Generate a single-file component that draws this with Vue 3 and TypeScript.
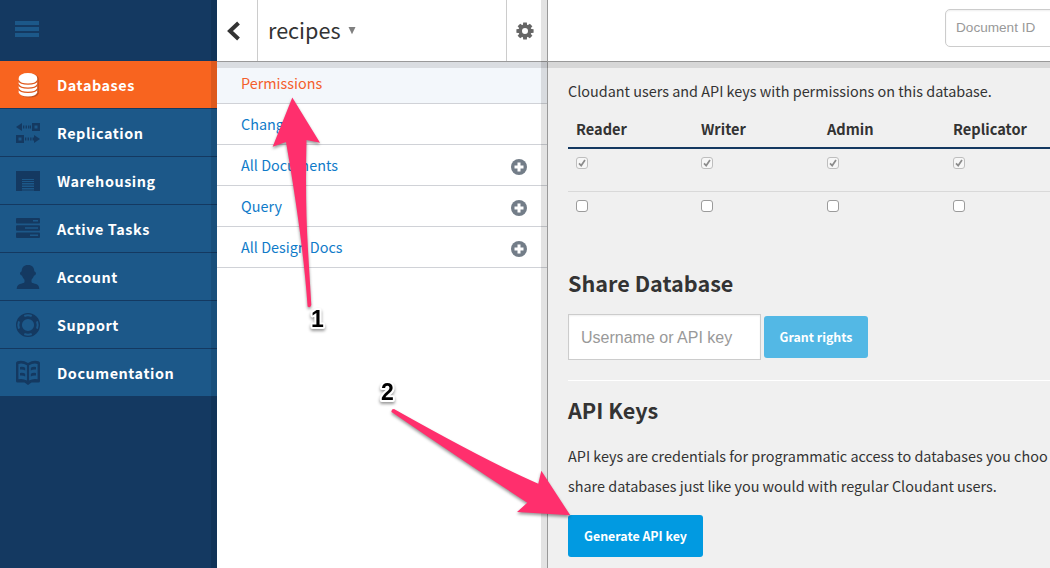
<script setup lang="ts">
interface NavItem { id: string; label: string; active?: boolean }
interface SubItem { label: string; active?: boolean; add?: boolean }

const nav: NavItem[] = [
  { id: 'db', label: 'Databases', active: true },
  { id: 'replication', label: 'Replication' },
  { id: 'warehouse', label: 'Warehousing' },
  { id: 'tasks', label: 'Active Tasks' },
  { id: 'account', label: 'Account' },
  { id: 'support', label: 'Support' },
  { id: 'docs', label: 'Documentation' },
]
const sub: SubItem[] = [
  { label: 'Permissions', active: true },
  { label: 'Changes' },
  { label: 'All Documents', add: true },
  { label: 'Query', add: true },
  { label: 'All Design Docs', add: true },
]
const roles: string[] = ['Reader', 'Writer', 'Admin', 'Replicator']
const gearTeeth: number[] = [0, 45, 90, 135, 180, 225, 270, 315]
</script>

<template>
  <div class="app">
    <nav class="nav">
      <div class="nav-top">
        <svg width="24" height="17" viewBox="0 0 24 17" fill="#1c5889"><path d="M0 0h24v4H0zM0 6h24v4H0zM0 12h24v4H0z" /></svg>
      </div>
      <div v-for="n in nav" :key="n.id" class="nav-item" :class="{ active: n.active }">
        <svg class="nav-icon" width="24" height="25" viewBox="0 0 24 25" fill="#143961">
          <template v-if="n.id === 'db'">
            <path d="M4 6.500a9 4.900 0 0 1 18.700 0V21.500q-1.500 4-9.200 4T4 21.500z" fill="#c24e1b" />
            <path d="M2.700 6a9.200 4.900 0 0 1 18.500 0V20.500q-1.400 4-9.200 4t-9.300-4z" fill="#fff" />
            <path d="M2.300 8.200q1.700 3.900 9.700 3.900t9.700-3.900M2.300 12.300q1.700 3.900 9.700 3.900t9.700-3.900M2.300 16.400q1.700 3.900 9.700 3.900t9.700-3.900" fill="none" stroke="#e0591c" stroke-width="1.300" />
          </template>
          <template v-else-if="n.id === 'replication'">
            <path d="M0 7l6-4v8zM7 5.500h1.300v3H7zM9.600 5.500h1.300v3H9.600zM12.100 5.500h1.300v3h-1.300zM14 5.500h1v3h-1z" />
            <path fill-rule="evenodd" d="M16 3h8v8h-8zM18.500 5.500v3h3v-3zM0 15h8v8H0zM2.500 17.500v3h3v-3z" />
            <path d="M9 17.500h1.300v3H9zM11.600 17.500h1.300v3h-1.300zM14.200 17.500h1.300v3h-1.300zM16.600 17.500H18V15l6 4-6 4v-2.500h-1.400z" />
          </template>
          <template v-else-if="n.id === 'warehouse'">
            <path d="M0 3h24v20h-6V11H6v12H0z" />
            <path d="M6 12h12v1H6zM6 14h12v1H6zM6 16.500h12v1H6zM6 19h12v1H6zM6 21.500h12v1H6z" />
          </template>
          <template v-else-if="n.id === 'tasks'">
            <rect y="2" width="24" height="5.500" rx="1" /><rect y="9.200" width="24" height="5.500" rx="1" /><rect y="16.400" width="24" height="5.500" rx="1" />
            <path fill="#1c5889" d="M17 4h5v1.600h-5zM9 11.200h13v1.600H9zM14 18.400h8V20h-8z" />
          </template>
          <template v-else-if="n.id === 'account'">
            <path d="M12 1c-4.300 0-6.300 2.600-6.300 6.300-.9.300-2 1.500-1.600 2.600.2.900 1.100 1.500 1.900 1.700.5 1.800 1.400 3.100 2.500 4.100v2.500c-1 1-3 1.300-4.600 1.900C1.800 20.900.900 22.200.700 25h22.600c-.2-2.800-1.100-4.100-3.200-4.900-1.600-.6-3.600-.9-4.600-1.900v-2.500c1.100-1 2-2.300 2.500-4.100.8-.2 1.700-.8 1.900-1.700.4-1.100-.7-2.300-1.600-2.600C18.300 3.600 16.300 1 12 1z" />
          </template>
          <template v-else-if="n.id === 'support'">
            <path fill-rule="evenodd" d="M12 1a12 12 0 1 1 0 24a12 12 0 1 1 0-24zM12 6.900a6.100 6.100 0 1 0 0 12.200a6.100 6.100 0 1 0 0-12.200z" />
            <g fill="none" stroke="#1c5889" stroke-width="2"><path d="M8.300 4q3.700-1.400 7.400 0M8.300 22q3.700 1.400 7.400 0M3 9.300q-1.400 3.700 0 7.400M21 9.300q1.400 3.700 0 7.400" /></g>
          </template>
          <template v-else>
            <path fill-rule="evenodd" d="M1.500 1.200Q7-.2 12 2.900q5-3.100 10.500-1.700Q24 1.700 24 3v18q0 1.500-1.500 1.500h-7L12 25l-3.500-2.500h-7Q0 22.500 0 21V3Q0 1.700 1.500 1.200zM2.400 3.900v15.400q4.600-1 8.500 1.200V5.300Q7 2.900 2.400 3.900zM21.600 3.900Q17 2.900 13.100 5.300v15.200q3.900-2.200 8.500-1.200z" />
            <path d="M4 7q3-.6 5.200.8v2.600Q7 9.200 4 9.600zM4 13q3-.6 5.200.8v2.600Q7 15.200 4 15.600zM20 7q-3-.6-5.200.8v2.600q2.200-1.200 5.200-.8zM20 13q-3-.6-5.200.8v2.600q2.200-1.200 5.200-.8z" />
          </template>
        </svg>
        <span>{{ n.label }}</span>
      </div>
    </nav>

    <div class="work">
      <header class="header">
        <div class="back">
          <svg width="14" height="20" viewBox="0 0 14 20"><path d="M11.500 2L3 10l8.500 8" fill="none" stroke="#333" stroke-width="4" /></svg>
        </div>
        <div class="db-name"><span>recipes</span><svg width="8" height="8" viewBox="0 0 8 8"><path d="M.5 0h7L4 7.300z" fill="#808080" /></svg></div>
        <div class="gear">
          <svg width="18" height="18" viewBox="-9 -9 18 18">
            <g fill="#666"><path v-for="a in gearTeeth" :key="a" d="M-1.800-8.600h3.600L2.300-5h-4.600z" :transform="`rotate(${a})`" /></g>
            <circle r="4.750" fill="none" stroke="#666" stroke-width="3.500" />
          </svg>
        </div>
        <div class="search"><input class="doc-id" type="text" placeholder="Document ID" /></div>
      </header>

      <div class="columns">
        <aside class="sub">
          <div v-for="s in sub" :key="s.label" class="sub-item" :class="{ active: s.active }">
            <span>{{ s.label }}</span>
            <svg v-if="s.add" width="16" height="16" viewBox="0 0 16 16"><circle cx="8" cy="8" r="8" fill="#737d88" /><path d="M6.500 3.500h3v3h3v3h-3v3h-3v-3h-3v-3h3z" fill="#fff" /></svg>
          </div>
        </aside>
        <main class="main">
          <p class="intro"><span>Cloudant users and API keys with permissions on this database.</span></p>
          <div class="row head"><div v-for="r in roles" :key="r"><span>{{ r }}</span></div></div>
          <div class="row first">
            <div v-for="r in roles" :key="r"><i class="box disabled"><svg width="10" height="10" viewBox="0 0 10 10"><path d="M2 5.300l2.200 2.300L8 2" fill="none" stroke="#8c8c8c" stroke-width="1.700" /></svg></i></div>
          </div>
          <div class="row"><div v-for="r in roles" :key="r"><i class="box"></i></div></div>
          <h2 class="share"><span>Share Database</span></h2>
          <div class="form">
            <input class="user" type="text" placeholder="Username or API key" />
            <button class="btn pale"><span>Grant rights</span></button>
          </div>
          <hr />
          <h2 class="keys"><span>API Keys</span></h2>
          <p class="desc"><span>API keys are credentials for programmatic access to databases you choo</span><br /><span>share databases just like you would with regular Cloudant users.</span></p>
          <button class="btn generate"><span>Generate API key</span></button>
        </main>
      </div>
    </div>

    <div class="nav-edge"></div>
    <div class="header-shade"></div>
    <div class="panel-edge"></div>
    <svg class="notes" width="1050" height="568" viewBox="0 0 1050 568">
      <g fill="#ff2f6d">
        <path d="M292.300 97.500L320 142.800 306.500 140Q305 200 308 250L311.300 305Q310 308.500 307.600 306.500Q303 240 286 142L272.700 146.700z" />
        <path d="M570.300 515.300L541.300 470.700 538.300 483.700Q490 463 394 409Q391 409 391.500 412Q466 463 527.300 502.700L517 512z" />
      </g>
      <g class="digits"><text x="311" y="327">1</text><text x="381" y="400">2</text></g>
    </svg>
  </div>
</template>

<style>
html, body { margin: 0; overflow: hidden; }
</style>
<style scoped>
.app { position: relative; display: flex; width: 1050px; height: 568px; overflow: hidden; font-family: "Noto Sans CJK SC", "Noto Sans CJK JP", sans-serif; color: #333; background: #fff; }
.app * { box-sizing: border-box; }
.nav { width: 217px; flex: none; background: #143961; }
.nav-top { height: 61px; padding: 21px 0 0 15px; }
.nav-top svg { display: block; }
.nav-item { display: flex; align-items: center; height: 48px; padding-left: 16px; gap: 17px; background: #1c5889; border-bottom: 1px solid #143961; color: #fff; font-size: 14.400px; font-weight: 700; letter-spacing: .55px; line-height: 23px; }
.nav-item.active { background: #f8641f; }
.nav-icon { flex: none; overflow: visible; }
.work { width: 833px; flex: none; display: flex; flex-direction: column; }
.header { display: flex; height: 62px; border-bottom: 1px solid #999; background: #fff; }
.back { width: 41px; border-right: 1px solid #ccc; padding: 21px 0 0 10px; }
.back svg, .gear svg { display: block; }
.db-name { width: 249px; border-right: 1px solid #ccc; padding: 12px 0 0 10px; display: flex; gap: 7px; font-size: 21.600px; line-height: 36px; }
.db-name svg { margin-top: 15px; }
.gear { width: 41px; padding: 22px 0 0 9px; border-right: 1px solid #999; }
.search { flex: 1; padding: 9px 0 0 397px; overflow: hidden; }
.doc-id { width: 180px; height: 38px; border: 1px solid #ccc; border-radius: 5px; padding: 0 10px 1px; font: 13.600px "Liberation Sans", sans-serif; box-shadow: inset 0 1px 2px #0001; }
input { display: block; background: #fff; outline: 0; }
input::placeholder { color: #999; opacity: 1; }
.columns { display: flex; flex: 1; }
.sub { width: 331px; flex: none; border-right: 1px solid #999; background: #fff; }
.sub-item { display: flex; height: 41px; align-items: center; justify-content: space-between; padding: 0 20px 0 24px; border-bottom: 1px solid #d0d2d7; color: #0f7bc9; font-size: 14.400px; line-height: 22px; }
.sub-item svg { position: relative; top: 2px; }
.sub-item.active { height: 42px; padding-top: 1px; background: #f3f7fb; color: #f35f2c; }
.main { flex: 1; min-width: 0; padding-left: 20px; background: #f0f0f0; overflow: hidden; }
p, h2 { margin: 0; white-space: nowrap; }
.intro { padding-top: 17px; height: 51px; font-size: 14.420px; line-height: 24px; }
.row { display: grid; grid-template-columns: 125px 126px 126px 1fr; padding-left: 8px; height: 52px; padding-top: 8px; }
.row.head { height: 36px; padding-top: 4px; border-bottom: 2px solid #143961; font-size: 14.600px; font-weight: 700; line-height: 24px; }
.row.first { height: 43px; border-bottom: 1px solid #d9d9d9; }
.box { display: block; width: 12px; height: 12px; border: 1px solid #9b9b9b; border-radius: 3px; background: #fff; }
.box.disabled { border-color: #bebebe; background: #f7f7f7; }
.box svg { display: block; }
h2 { font-size: 21.600px; font-weight: 700; line-height: 32px; }
.share { height: 70px; padding-top: 23px; margin-top: 0; }
.form { display: flex; align-items: center; gap: 3px; height: 46px; }
.user { width: 193px; height: 46px; border: 1px solid #ccc; padding: 1px 12px 0; font: 16px "Liberation Sans", sans-serif; box-shadow: inset 0 1px 2px #0001; }
.btn { display: block; height: 42px; padding: 0; border: 0; border-radius: 3px; color: #fff; font-family: inherit; font-size: 12.400px; font-weight: 700; line-height: 42px; white-space: nowrap; text-align: center; }
.pale { width: 104px; background: #53b8e5; }
.generate { width: 135px; background: #019ae1; }
hr { height: 1px; margin: 20px 0 0; border: 0; background: #fff; }
.keys { padding-top: 13px; height: 60px; }
.desc { height: 74px; font-size: 14.420px; line-height: 30px; }
.nav-edge { position: absolute; left: 211px; top: 0; width: 6px; height: 568px; background: rgba(0,0,0,.1); }
.header-shade { position: absolute; left: 217px; top: 62px; width: 833px; height: 6px; background: rgba(0,0,0,.1); }
.panel-edge { position: absolute; left: 541px; top: 0; width: 6px; height: 568px; background: rgba(0,0,0,.11); }
.notes { position: absolute; left: 0; top: 0; filter: drop-shadow(0 2px 1.500px rgba(0,0,0,.4)); }
.digits { font: bold 23px "Liberation Sans", sans-serif; fill: #000; stroke: #fff; stroke-width: 4px; stroke-linejoin: round; paint-order: stroke; }
</style>
